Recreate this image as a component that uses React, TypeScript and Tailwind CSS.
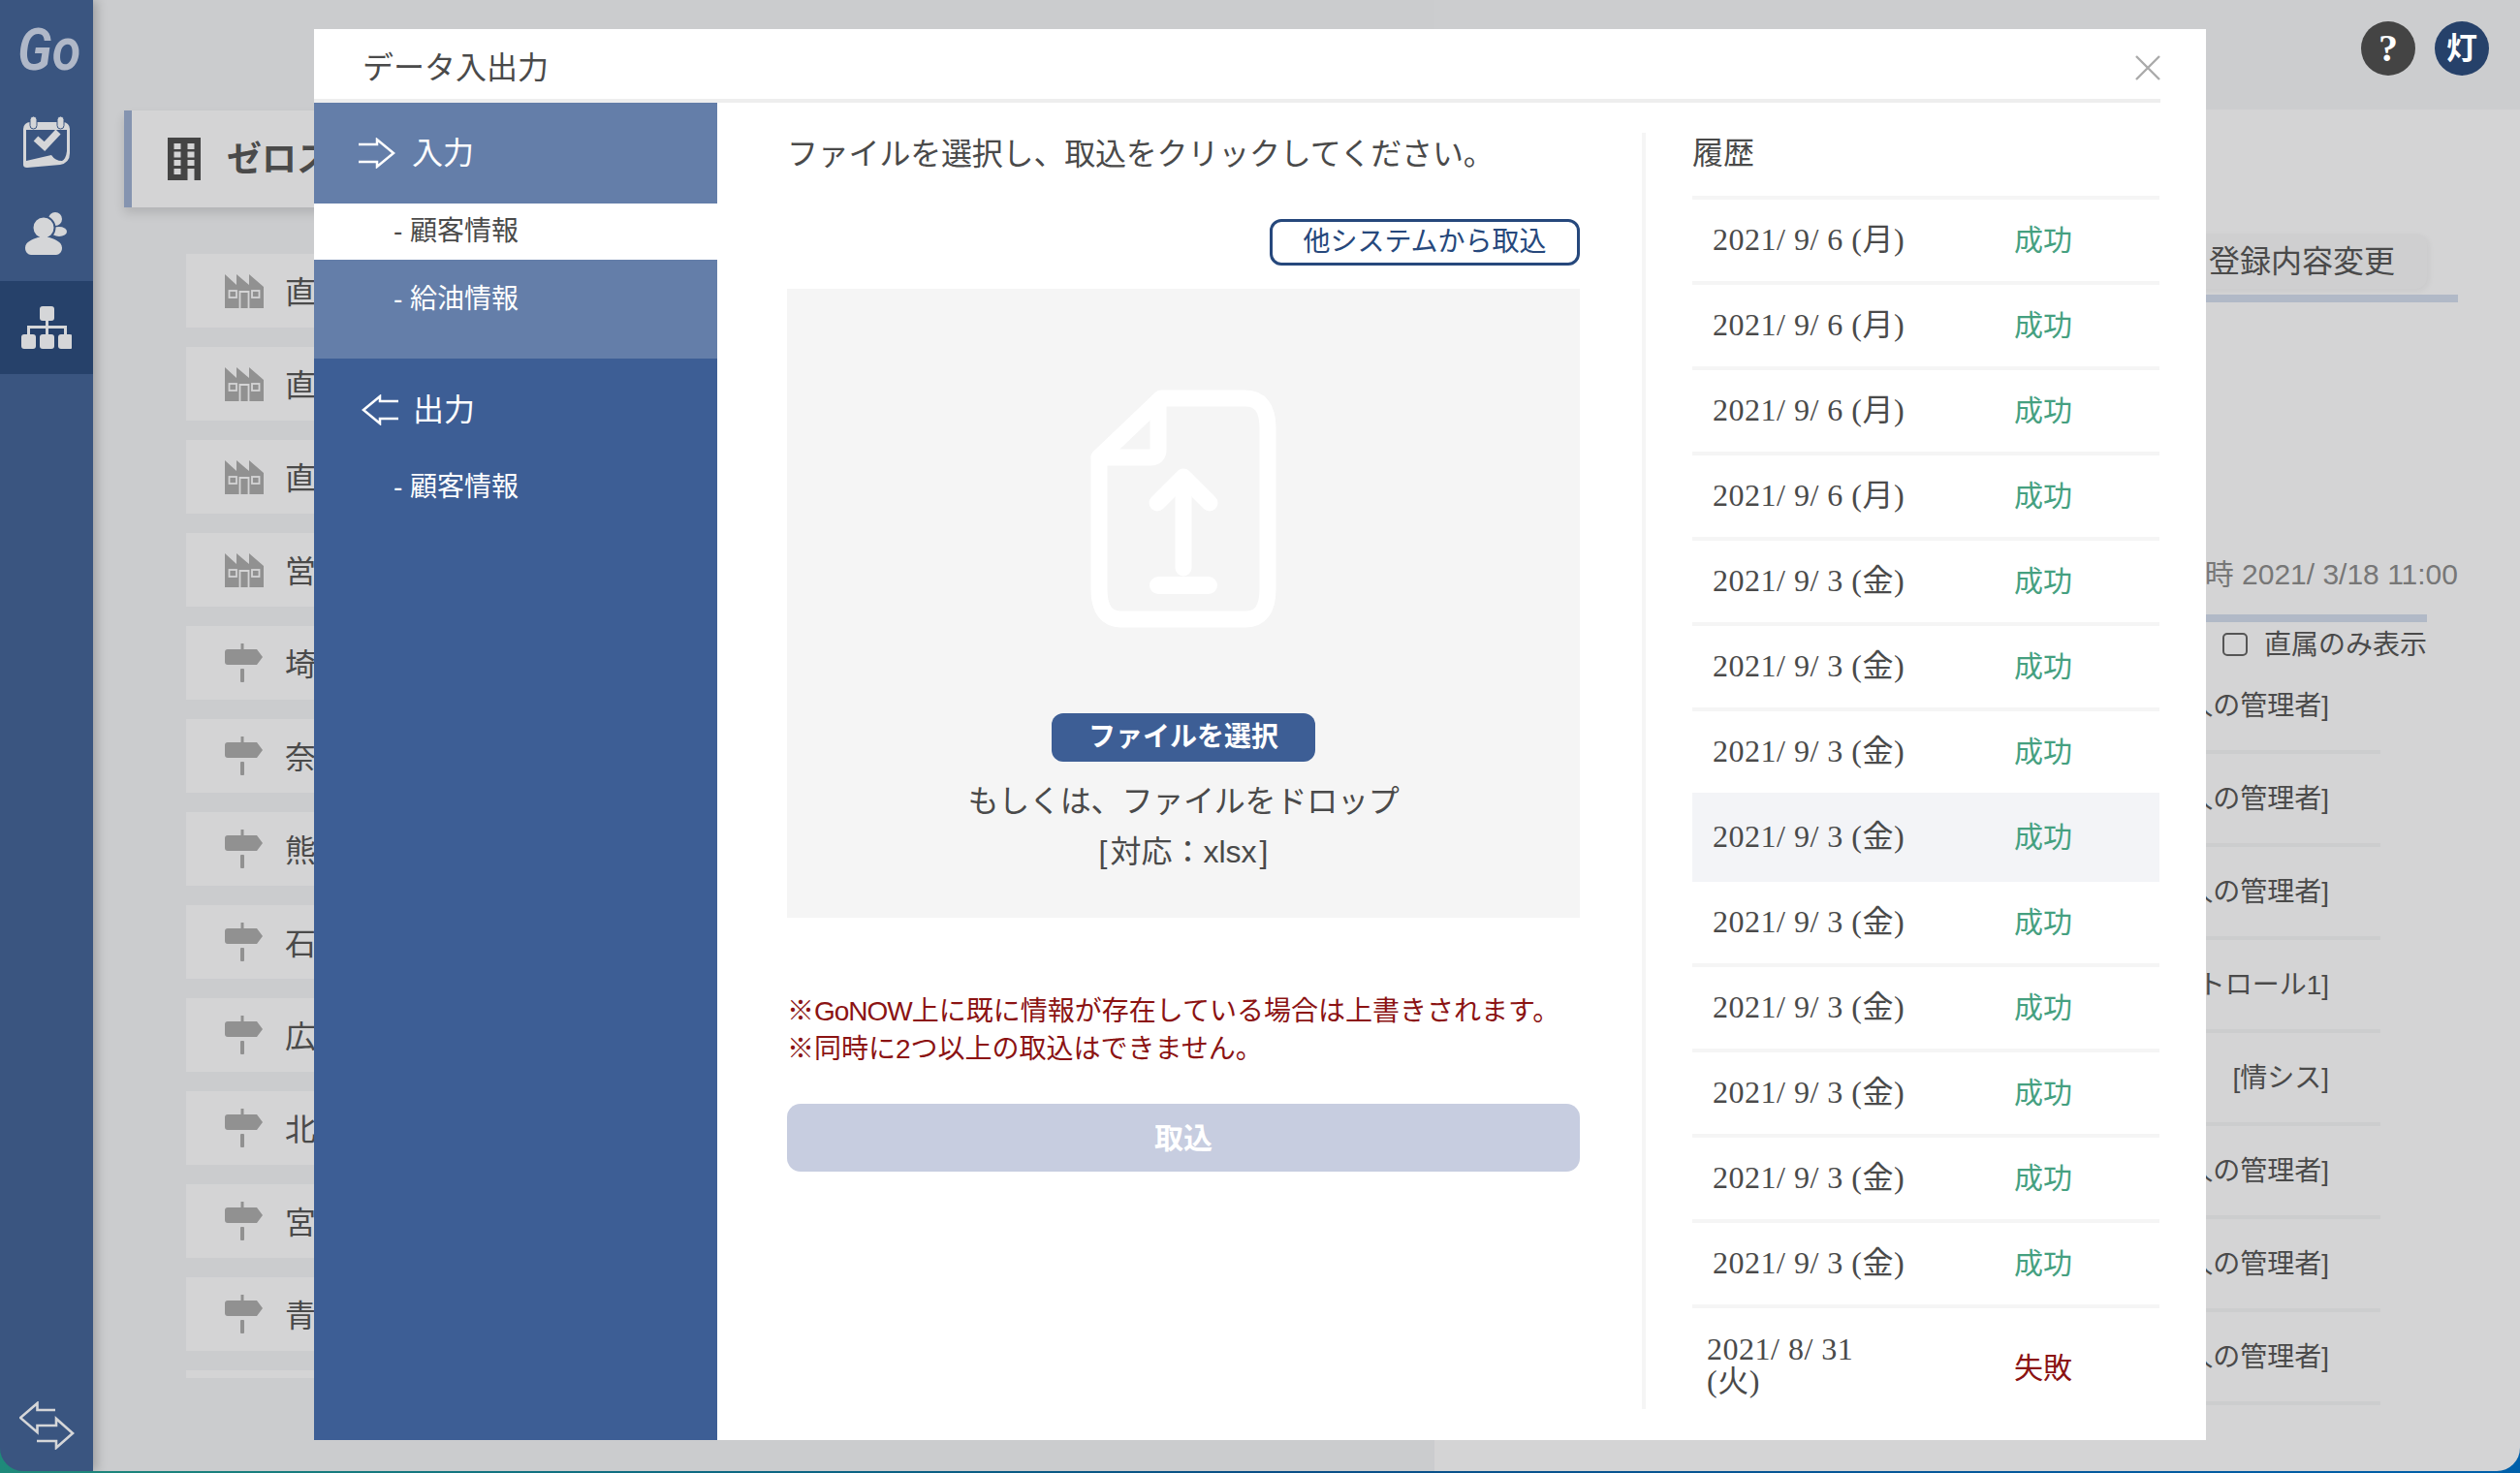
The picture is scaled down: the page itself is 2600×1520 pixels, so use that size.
const factoryRows = ['直', '直', '直', '営']
const signRows = ['埼', '奈', '熊', '石', '広', '北', '宮', '青']

const history = [
  ...Array(4).fill('2021/ 9/ 6 (月)'),
  ...Array(9).fill('2021/ 9/ 3 (金)'),
]

const roleRows = ['人の管理者]', '人の管理者]', '人の管理者]', 'トロール1]', '[情シス]', '人の管理者]', '人の管理者]', '人の管理者]']

function CalendarIcon() {
  return (
    <svg width="48" height="54" viewBox="0 0 48 54" fill="#d5d6d8">
      <path d="M0 13a7 7 0 0 1 7-7h34a7 7 0 0 1 7 7v1H0z" />
      <rect x="7" y="0" width="7" height="13" rx="3.5" stroke="#3a5580" strokeWidth="1" />
      <rect x="35" y="0" width="7" height="13" rx="3.5" stroke="#3a5580" strokeWidth="1" />
      <path d="M0 50V14h3v32l26-6q4 6 11 6 4-2 5-10V14h3v24q0 10-10 12L4 53q-4 0-4-3z" />
      <path d="M13 23l9 8 14-15" fill="none" stroke="#d5d6d8" strokeWidth="7" />
    </svg>
  )
}

function UsersIcon() {
  return (
    <svg width="46" height="48" viewBox="0 0 46 48" fill="#d5d6d8">
      <circle cx="32" cy="8" r="7" />
      <ellipse cx="36" cy="21" rx="8" ry="5" />
      <circle cx="20" cy="17" r="11.5" stroke="#3a5580" strokeWidth="2" />
      <path d="M1 38c0-7 8-9 13-11h12c5 2 13 4 13 11 0 4-3 7-6 7H7c-3 0-6-3-6-7z" />
    </svg>
  )
}

function OrgIcon() {
  return (
    <svg width="52" height="44" viewBox="0 0 52 44" fill="#d5d6d8">
      <rect x="19" y="0" width="15" height="15" rx="3" />
      <rect x="0" y="29" width="15" height="15" rx="3" />
      <rect x="19" y="29" width="15" height="15" rx="3" />
      <rect x="38" y="29" width="15" height="15" rx="3" />
      <path d="M25 15h3v5h19v9h-3v-6H28v6h-3v-6H9v6H6v-9h19z" />
    </svg>
  )
}

function SwapIcon() {
  return (
    <svg width="58" height="50" viewBox="0 0 58 50" fill="none" stroke="#d5d6d8" strokeWidth="2.6">
      <path d="M37 9H18.5V2L1 17l17.5 15v-7H38v-7l17 15-17 15v-7H18" />
    </svg>
  )
}

function ArrowIcon({ flip }: { flip?: boolean }) {
  return (
    <svg width="38" height="32" viewBox="0 0 38 32" fill="none" stroke="#fff" strokeWidth="2.5" className={flip ? '-scale-x-100' : ''}>
      <path d="M0 7h19V2l17 14-17 14v-5H0" />
    </svg>
  )
}

function BuildingIcon() {
  return (
    <svg width="34" height="44" viewBox="0 0 34 44" fill="#d4d4d5">
      <rect width="34" height="44" fill="#444" />
      {[6, 14.5, 23].map((y) => (
        <g key={y}>
          <rect x="6.5" y={y} width="7" height="6" />
          <rect x="20.5" y={y} width="7" height="6" />
        </g>
      ))}
      <rect x="6.5" y="32" width="7" height="6" />
      <rect x="20.5" y="32" width="7" height="12" />
    </svg>
  )
}

function FactoryIcon() {
  return (
    <svg width="40" height="35" viewBox="0 0 40 35" className="shrink-0">
      <path d="M0 0l12 11V0l13 11V0l15 13v22H0z" fill="#919191" />
      <g fill="none" stroke="#d4d4d5" strokeWidth="1.8">
        <rect x="4.5" y="17" width="7.5" height="7" />
        <path d="M15.5 35V18h9v17" />
        <rect x="28" y="17" width="7.5" height="7" />
      </g>
    </svg>
  )
}

function SignIcon() {
  return (
    <svg width="40" height="40" viewBox="0 0 40 40" fill="#919191" className="shrink-0">
      <rect x="16.5" y="0" width="3" height="6" />
      <path d="M3 6h30l6 8-6 8H3q-3 0-3-3V9q0-3 3-3z" />
      <rect x="16" y="26" width="4" height="14" rx="1" />
    </svg>
  )
}

function DocUploadIcon() {
  return (
    <svg width="192" height="246" viewBox="0 0 192 246" fill="none" stroke="#fff" strokeWidth="17" strokeLinecap="round" strokeLinejoin="round">
      <path d="M73 9h87q23 0 23 31v166q0 31-23 31H32q-23 0-23-31V70z" />
      <path d="M70 12v50q0 8-8 8H9" />
      <path d="M96 92v92" />
      <path d="M69 117l27-27 27 27" />
      <path d="M70 202h52" strokeWidth="18" />
    </svg>
  )
}

export default function App() {
  return (
    <div className="relative w-[2600px] h-[1520px] overflow-hidden bg-gradient-to-r from-[#1f8a7a] via-[#0a4f86] to-[#0060aa] font-['Liberation_Sans','Noto_Sans_CJK_JP',sans-serif] text-[#4a4a4a]">
      <div className="flex h-[1518px] rounded-b-[24px] overflow-hidden">
        {/* Sidebar */}
        <div className="relative z-10 w-[96px] shrink-0 flex flex-col items-center bg-[#3a5580] shadow-[4px_0_10px_rgba(0,0,0,0.22)]">
          <div className="h-[100px] w-full pl-[18px] pt-[17px] font-['Roboto',sans-serif] italic font-semibold text-[60px] leading-[70px] text-[#b0b8c8]">
            <span className="block origin-left scale-x-90">Go</span>
          </div>
          <div className="h-[100px] w-full pt-[20px] flex justify-center"><CalendarIcon /></div>
          <div className="h-[90px] w-full pt-[18px] flex justify-center"><UsersIcon /></div>
          <div className="h-[96px] w-full flex justify-center pt-[26px] bg-[#26416a]"><OrgIcon /></div>
          <div className="mt-auto mb-[22px] ml-[1px]"><SwapIcon /></div>
        </div>

        {/* Left panel */}
        <div className="w-[1384px] shrink-0 bg-[#cbccce] pt-[114px]">
          <div className="ml-[32px] h-[100px] flex items-center gap-[27px] pl-[37px] border-l-[8px] border-[#8594b0] bg-[#d4d4d5] shadow-[0_6px_10px_rgba(0,0,0,0.12)] font-bold text-[36px]">
            <BuildingIcon />
            <span className="pt-[2px]">ゼロス</span>
          </div>
          <div className="ml-[96px] mt-[48px] h-[1160px] overflow-hidden flex flex-col gap-[20px]">
            {factoryRows.map((name, i) => (
              <div key={i} className="h-[76px] shrink-0 flex items-center gap-[22px] pl-[40px] bg-[#d4d4d5] text-[32px]">
                <FactoryIcon />
                <span className="pt-[3px]">{name}</span>
              </div>
            ))}
            {signRows.map((name, i) => (
              <div key={i} className="h-[76px] shrink-0 flex items-center gap-[22px] pl-[40px] bg-[#d4d4d5] text-[32px]">
                <SignIcon />
                <span className="pt-[3px]">{name}</span>
              </div>
            ))}
            <div className="h-[76px] shrink-0 bg-[#d4d4d5]" />
          </div>
        </div>

        {/* Right panel */}
        <div className="flex-1 flex flex-col bg-[#d4d4d5]">
          <div className="h-[113px] shrink-0 bg-[#cccdcf] flex justify-end gap-[20px] pt-[22px] pr-[32px]">
            <div className="w-[56px] h-[56px] rounded-full bg-[#444] flex items-center justify-center text-white font-bold text-[40px] font-['Liberation_Serif',serif]">?</div>
            <div className="w-[56px] h-[56px] rounded-full bg-[#26416a] flex items-center justify-center text-white font-bold text-[32px]">灯</div>
          </div>
          <div className="flex justify-end pr-[96px] mt-[128px]">
            <div className="h-[57px] w-[400px] flex items-center justify-end pr-[33px] rounded-[12px] bg-[#cfcfd0] shadow-[2px_2px_6px_rgba(0,0,0,0.05)] text-[32px]">登録内容変更</div>
          </div>
          <div className="h-[8px] ml-[200px] mr-[64px] mt-[6px] bg-[#b1b9c7]" />
          <div className="mt-[259px] h-[40px] pt-[2px] pr-[64px] text-right text-[30px] leading-[40px] text-[#777]">時 2021/ 3/18 11:00</div>
          <div className="h-[8px] ml-[200px] mr-[96px] mt-[23px] bg-[#b1b9c7]" />
          <div className="mt-[11px] flex justify-end items-center gap-[17px] pr-[96px] h-[24px] text-[28px]">
            <span className="w-[26px] h-[24px] rounded-[5px] border-2 border-[#555]" />
            <span className="pt-[2px]">直属のみ表示</span>
          </div>
          <div className="mt-[5px] mr-[144px] ml-[100px] flex flex-col">
            {roleRows.map((text, i) => (
              <div key={i} className="h-[96px] shrink-0 flex items-center justify-end pr-[53px] pt-[2px] border-b-4 border-[#cccdce] text-[28px] whitespace-nowrap">
                {text}
              </div>
            ))}
          </div>
        </div>
      </div>

      {/* Dialog */}
      <div className="absolute left-[324px] top-[30px] w-[1952px] h-[1456px] bg-white flex flex-col">
        <div className="h-[76px] shrink-0 mr-[47px] flex items-center justify-between pl-[50px] pt-[8px] border-b-4 border-[#eee] text-[32px]">
          <span>データ入出力</span>
          <svg width="26" height="26" viewBox="0 0 26 26" stroke="#aaa" strokeWidth="2.4">
            <path d="M1 1l24 24M25 1L1 25" />
          </svg>
        </div>
        <div className="flex-1 flex min-h-0">
          {/* Nav */}
          <div className="w-[416px] shrink-0 bg-[#3d5e95] text-white">
            <div className="h-[104px] bg-[#647ea9] flex items-center gap-[17px] pl-[46px] text-[32px]">
              <ArrowIcon />
              <span>入力</span>
            </div>
            <div className="h-[58px] bg-white pl-[82px] pt-[2px] text-[#4a4a4a] text-[28px] leading-[54px]">- 顧客情報</div>
            <div className="h-[102px] bg-[#647ea9] pl-[82px] pt-[12px] text-[28px] leading-[58px]">- 給油情報</div>
            <div className="h-[102px] flex items-center gap-[15px] pl-[49px] pt-[3px] text-[32px]">
              <ArrowIcon flip />
              <span>出力</span>
            </div>
            <div className="h-[58px] pl-[82px] pt-[2px] text-[28px] leading-[58px]">- 顧客情報</div>
          </div>

          {/* Import */}
          <div className="w-[818px] shrink-0 ml-[72px] pt-[29px]">
            <p className="text-[32px] leading-[48px] tracking-[-0.2px]">ファイルを選択し、取込をクリックしてください。</p>
            <div className="flex justify-end mt-[43px]">
              <button className="w-[320px] h-[48px] rounded-[12px] border-[3px] border-[#26487c] bg-white text-[#26487c] text-[28px] leading-none">他システムから取込</button>
            </div>
            <div className="mt-[24px] h-[649px] bg-[#f5f5f5] flex flex-col items-center pt-[104px]">
              <DocUploadIcon />
              <button className="mt-[88px] w-[272px] h-[50px] rounded-[12px] bg-[#3d5e95] text-white font-bold text-[28px] leading-none">ファイルを選択</button>
              <p className="mt-[15px] text-[32px] leading-[52px] tracking-[-0.2px]">もしくは、ファイルをドロップ</p>
              <p className="text-[32px] leading-[52px]">[<span className="mx-[3px]">対応：xlsx</span>]</p>
            </div>
            <div className="mt-[77px] text-[#8b1313] text-[28px] leading-[39px]">
              <p>※<span className="tracking-[-1px]">GoNOW</span>上に既に情報が存在している場合は上書きされます。</p>
              <p>※同時に2つ以上の取込はできません。</p>
            </div>
            <button className="mt-[37px] w-full h-[70px] rounded-[14px] bg-[#c7cde0] text-white font-bold text-[30px]">取込</button>
          </div>

          {/* History */}
          <div className="w-[534px] shrink-0 ml-[64px] mt-[31px] h-[1317px] pl-[48px] border-l-4 border-[#f5f5f5]">
            <p className="text-[32px] leading-[42px]">履歴</p>
            <div className="mt-[23px] font-['Liberation_Serif','Noto_Sans_CJK_JP',serif]">
              {history.map((date, i) => (
                <div key={i} className={`h-[88px] flex items-center pb-[3px] border-t-4 text-[32px] ${i === 7 ? 'bg-[#f3f4f7] border-[#f3f4f7]' : i === 8 ? 'border-[#f3f4f7]' : 'border-[#f5f5f5]'}`}>
                  <span className="w-[332px] pl-[21px] tracking-[0.5px]">{date}</span>
                  <span className="pb-[3px] text-[#45a080] text-[30px] font-['Noto_Sans_CJK_JP',sans-serif]">成功</span>
                </div>
              ))}
              <div className="h-[104px] flex items-center pt-[18px] border-t-4 border-[#f5f5f5] text-[32px] leading-[33px]">
                <span className="w-[332px] pl-[15px] tracking-[0.5px]">2021/ 8/ 31<br />(火)</span>
                <span className="text-[#8b1313] text-[30px] font-['Noto_Sans_CJK_JP',sans-serif]">失敗</span>
              </div>
            </div>
          </div>
        </div>
      </div>
    </div>
  )
}
